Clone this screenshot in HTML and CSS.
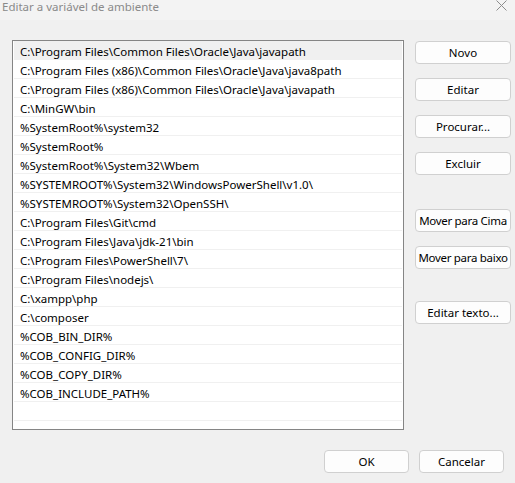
FILE: index.html
```
<!DOCTYPE html>
<html lang="pt">
<head>
    <meta charset="UTF-8">
    <title>Editar a variável de ambiente</title>
    <link rel="stylesheet" href="styles.css">
</head>
<body>
    <div class="titlebar">
        <span class="title">Editar a variável de ambiente</span>
        <svg class="close" width="11" height="11" viewBox="0 0 11 11">
            <path d="M0.5 0.5 L10.5 10.5 M10.5 0.5 L0.5 10.5" stroke="#8c8c8c" stroke-width="1"/>
        </svg>
    </div>

    <div class="main">
        <div class="list">
            <div class="row selected">C:\Program Files\Common Files\Oracle\Java\javapath</div>
            <div class="row">C:\Program Files (x86)\Common Files\Oracle\Java\java8path</div>
            <div class="row">C:\Program Files (x86)\Common Files\Oracle\Java\javapath</div>
            <div class="row">C:\MinGW\bin</div>
            <div class="row">%SystemRoot%\system32</div>
            <div class="row">%SystemRoot%</div>
            <div class="row">%SystemRoot%\System32\Wbem</div>
            <div class="row">%SYSTEMROOT%\System32\WindowsPowerShell\v1.0\</div>
            <div class="row">%SYSTEMROOT%\System32\OpenSSH\</div>
            <div class="row">C:\Program Files\Git\cmd</div>
            <div class="row">C:\Program Files\Java\jdk-21\bin</div>
            <div class="row">C:\Program Files\PowerShell\7\</div>
            <div class="row">C:\Program Files\nodejs\</div>
            <div class="row">C:\xampp\php</div>
            <div class="row">C:\composer</div>
            <div class="row">%COB_BIN_DIR%</div>
            <div class="row">%COB_CONFIG_DIR%</div>
            <div class="row">%COB_COPY_DIR%</div>
            <div class="row">%COB_INCLUDE_PATH%</div>
            <div class="row"></div>
            <div class="row"></div>
        </div>

        <div class="actions">
            <button class="btn">Novo</button>
            <button class="btn">Editar</button>
            <button class="btn">Procurar...</button>
            <button class="btn">Excluir</button>
            <button class="btn btn-move-up">Mover para Cima</button>
            <button class="btn btn-tight">Mover para baixo</button>
            <button class="btn btn-text">Editar texto...</button>
        </div>
    </div>

    <div class="footer">
        <button class="btn btn-footer">OK</button>
        <button class="btn btn-footer">Cancelar</button>
    </div>
</body>
</html>
```

FILE: styles.css
```
body {
    margin: 0;
    width: 515px;
    height: 483px;
    background-color: #f0f0f0;
    font-family: "Noto Sans", "Open Sans", sans-serif;
    font-size: 11.5px;
    color: #000;
    overflow: hidden;
}

.titlebar {
    height: 20px;
    background-color: #f3f3f3;
    display: flex;
    justify-content: space-between;
    align-items: flex-start;
}

.title {
    color: #8a8a8a;
    padding-left: 2px;
    line-height: 13px;
}

.close {
    margin: 0 8px 0 0;
}

.main {
    display: flex;
    padding: 20px 0 0 12px;
}

.list {
    width: 388px;
    height: 388px;
    border: 1px solid #858585;
    background-color: #fff;
    padding: 0 1px;
    overflow: hidden;
}

.row {
    height: 18px;
    line-height: 21px;
    border-bottom: 1px solid #f0f0f0;
    padding-left: 6px;
    white-space: nowrap;
}

.row.selected {
    background-color: #f0f0f0;
}

.actions {
    display: flex;
    flex-direction: column;
    margin-left: 11px;
    padding-top: 1px;
}

.btn {
    width: 96px;
    height: 23px;
    margin-bottom: 14px;
    padding: 0;
    background-color: #fdfdfd;
    border: 1px solid #d0d0d0;
    border-radius: 4px;
    font-family: inherit;
    font-size: 11.5px;
    color: #000;
    white-space: nowrap;
}

.btn-move-up {
    margin-top: 20px;
    letter-spacing: -0.3px;
}

.btn-tight {
    letter-spacing: -0.3px;
}

.btn-text {
    margin-top: 18px;
}

.footer {
    display: flex;
    justify-content: flex-end;
    gap: 10px;
    padding: 20px 11px 0 0;
}

.btn-footer {
    width: 85px;
    margin: 0;
}
```
